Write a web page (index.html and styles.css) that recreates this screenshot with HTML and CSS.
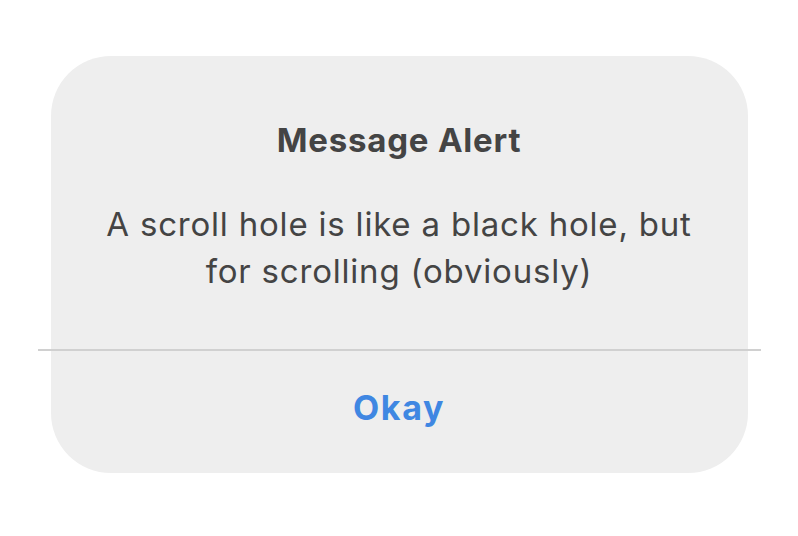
FILE: index.html
```html
<!DOCTYPE html>
<html lang="en">
<head>
    <meta charset="UTF-8">
    <meta name="viewport" content="width=device-width, initial-scale=1.0">
    <title>Message Alert</title>
    <link rel="stylesheet" href="styles.css">
</head>
<body>
    <div class="alert">
        <div class="alert-body">
            <div class="alert-title">Message Alert</div>
            <div class="alert-message">A scroll hole is like a black hole, but for scrolling (obviously)</div>
        </div>
        <div class="alert-divider"></div>
        <button class="alert-button">Okay</button>
    </div>
</body>
</html>
```

FILE: styles.css
```css
body {
    font-family: 'Inter', 'Noto Sans', sans-serif;
    margin: 0;
    padding: 0;
    background: #fff;
    display: flex;
    justify-content: center;
}

.alert {
    width: 697px;
    height: 417px;
    margin-top: 56px;
    background: #eeeeee;
    border-radius: 60px;
    display: flex;
    flex-direction: column;
}

.alert-body {
    flex-shrink: 0;
    padding: 64px 50px 0;
    height: 293px;
    box-sizing: border-box;
    text-align: center;
    color: #444;
    letter-spacing: 0.8px;
}

.alert-title {
    font-size: 33px;
    line-height: 40px;
    font-weight: 700;
    margin-bottom: 41px;
}

.alert-message {
    font-size: 33px;
    line-height: 47px;
}

.alert-divider {
    flex-shrink: 0;
    height: 2px;
    background: #d0d0d0;
    margin: 0 -13px;
}

.alert-button {
    flex: 1;
    background: none;
    border: none;
    font-family: inherit;
    font-size: 34px;
    font-weight: 700;
    letter-spacing: 1.6px;
    color: #3f87e2;
    cursor: pointer;
    padding: 0 0 10px;
}
```
